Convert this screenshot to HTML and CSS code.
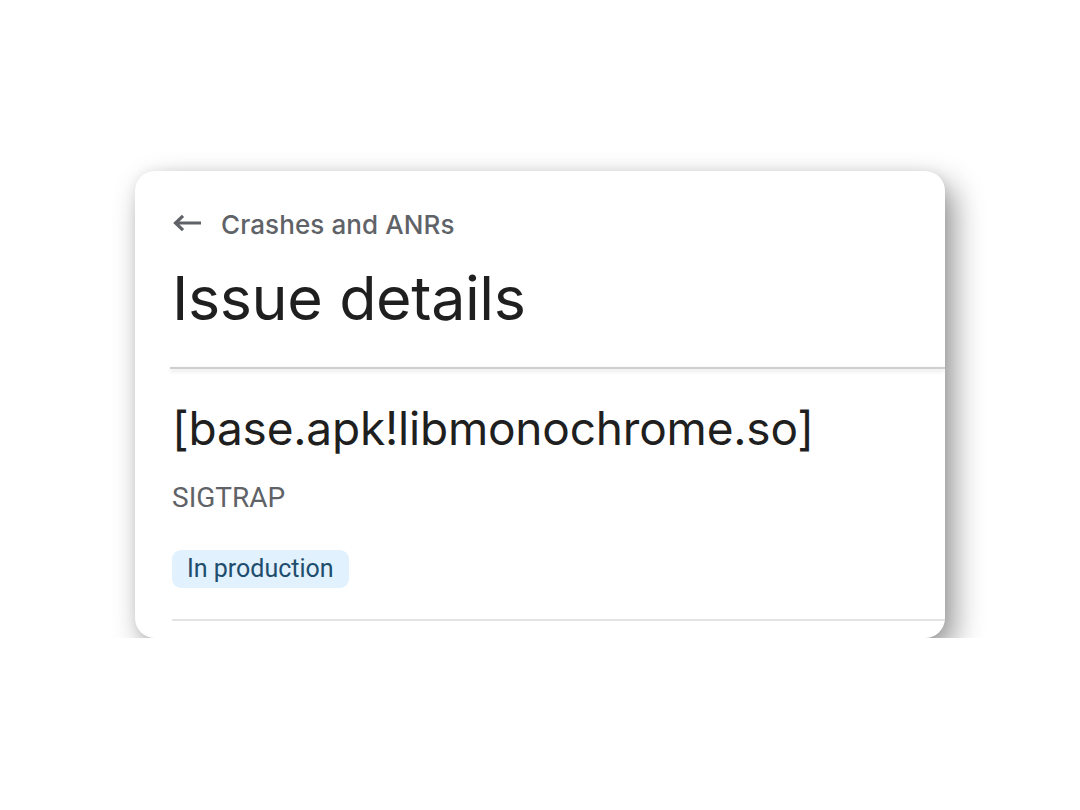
FILE: index.html
```html
<!DOCTYPE html>
<html lang="en">
<head>
  <meta charset="UTF-8">
  <meta name="viewport" content="width=device-width, initial-scale=1.0">
  <title>Issue details</title>
  <link rel="stylesheet" href="styles.css">
</head>
<body>

  <div class="stage">
    <div class="card">

      <!-- Page header -->
      <header class="page-header">
        <a class="back-link" href="#crashes">
          <svg class="back-icon" viewBox="0 0 30 18" width="30" height="18" aria-hidden="true">
            <path d="M29 9H3.5M11 1.8L3.5 9L11 16.2" fill="none" stroke="currentColor" stroke-width="3.2"/>
          </svg>
          <span>Crashes and ANRs</span>
        </a>
        <h1 class="page-title">Issue details</h1>
      </header>
      <div class="header-rule"></div>

      <!-- Issue summary -->
      <section class="issue">
        <h2 class="issue-title">[base.apk!libmonochrome.so]</h2>
        <p class="issue-signal">SIGTRAP</p>
        <span class="chip">In production</span>
      </section>

      <div class="divider"></div>
    </div>
  </div>

</body>
</html>
```

FILE: styles.css
```css
body {
  margin: 0;
  padding: 0;
  background-color: #fff;
  font-family: "Inter", "Open Sans", sans-serif;
}

.stage {
  padding: 171px 0 0 135px;
}

.card {
  width: 810px;
  height: 467px;
  background: #fff;
  border-radius: 20px;
  overflow: hidden;
  box-shadow: 9px 13px 30px rgba(0, 0, 0, 0.42), 0 0 12px rgba(0, 0, 0, 0.06);
}

.page-header {
  padding: 36px 0 0 37px;
  height: 196px;
  box-sizing: border-box;
}

.back-link {
  display: flex;
  align-items: center;
  gap: 19px;
  height: 34px;
  color: #5f6368;
  text-decoration: none;
  font-size: 26px;
  font-weight: 500;
  letter-spacing: 0.1px;
}

.back-icon {
  margin-top: -3px;
}

.page-title {
  margin: 25px 0 0;
  font-size: 61px;
  font-weight: 400;
  line-height: 64px;
  color: #1f1f1f;
  letter-spacing: -0.4px;
}

.header-rule {
  margin-left: 35px;
  height: 2px;
  background-color: #cfcfcf;
  box-shadow: 0 2px 4px rgba(0, 0, 0, 0.14);
}

.issue {
  display: flex;
  flex-direction: column;
  align-items: flex-start;
  padding: 32px 0 0 37px;
}

.issue-title {
  margin: 0;
  font-size: 46px;
  font-weight: 400;
  line-height: 54px;
  color: #1f1f1f;
  letter-spacing: -0.2px;
}

.issue-signal {
  margin: 27px 0 0;
  font-family: "Roboto", sans-serif;
  font-size: 28px;
  line-height: 32px;
  color: #5f6368;
}

.chip {
  margin-top: 36px;
  padding: 0 15px;
  height: 38px;
  line-height: 38px;
  border-radius: 9px;
  background-color: #e1f1fd;
  color: #1f4d6d;
  font-family: "Roboto", sans-serif;
  font-size: 25px;
}

.divider {
  margin: 31px 0 0 37px;
  height: 2px;
  background-color: #e3e3e6;
}
```
